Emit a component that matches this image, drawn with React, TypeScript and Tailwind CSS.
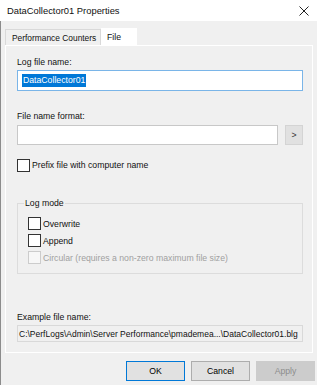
import React from "react";

function CheckBox({ disabled = false }: { disabled?: boolean }) {
  return (
    <span
      className={
        "inline-block w-[13px] h-[13px] border shrink-0 " +
        (disabled ? "border-[#cccccc] bg-[#f7f7f7]" : "border-[#333333] bg-white")
      }
    />
  );
}

function Button({
  label,
  primary = false,
  disabled = false,
}: {
  label: string;
  primary?: boolean;
  disabled?: boolean;
}) {
  return (
    <div
      className={
        "w-[59px] h-[20px] flex items-center justify-center border " +
        (primary
          ? "border-[#0078d7] bg-[#e1e1e1] text-black"
          : disabled
            ? "border-[#cccccc] bg-[#cccccc] text-[#8c8c8c]"
            : "border-[#adadad] bg-[#e1e1e1] text-black")
      }
    >
      {label}
    </div>
  );
}

export default function App() {
  return (
    <div
      className="w-[317px] h-[385px] bg-[#f0f0f0] flex flex-col text-[8.7px] text-[#111] leading-[14px] overflow-hidden"
      style={{ fontFamily: '"Liberation Sans", Arial, sans-serif' }}
    >
      {/* Title bar */}
      <div className="h-[21px] bg-white flex items-center justify-between pl-[7px] pr-[8px] shrink-0">
        <span className="text-[9.4px]">DataCollector01 Properties</span>
        <svg width="10" height="10" viewBox="0 0 10 10" className="text-[#222]">
          <path d="M0.5 0.5 L9.5 9.5 M9.5 0.5 L0.5 9.5" stroke="currentColor" strokeWidth="1" />
        </svg>
      </div>

      <div className="flex-1 border-l border-[#8c8c8c] pl-[4px] pt-[7px]">
        {/* Tabs */}
        <div className="flex items-end h-[17px]">
          <div className="h-[16px] w-[96px] pl-[6px] flex items-center border border-b-0 border-[#d9d9d9] bg-[#f0f0f0] text-[8.4px]">
            Performance Counters
          </div>
          <div className="h-[17px] w-[36px] pl-[6px] flex items-center bg-white">File</div>
        </div>

        {/* Tab page */}
        <div className="w-[308px] h-[308px] border border-white pl-[11px] pr-[8px] pt-[9px]">
          <div>Log file name:</div>
          <div className="mt-[1px] w-[286px] h-[21px] border border-[#7ab5e8] bg-white flex items-center pl-[4px]">
            <span className="bg-[#0078d7] text-white px-[1px] leading-[13px]">DataCollector01</span>
          </div>

          <div className="mt-[18px]">File name format:</div>
          <div className="mt-[2px] flex gap-[7px]">
            <div className="w-[261px] h-[20px] border border-[#c8c8c8] bg-white" />
            <div className="w-[18px] h-[20px] border border-[#d4d4d4] bg-[#e1e1e1] flex items-center justify-center text-[#333]">
              &gt;
            </div>
          </div>

          <label className="mt-[13px] flex items-center gap-[2px]">
            <CheckBox />
            <span>Prefix file with computer name</span>
          </label>

          {/* Log mode group */}
          <div className="relative mt-[31px] w-[286px] h-[71px] border border-[#dcdcdc] pl-[10px] pt-[13px]">
            <span className="absolute -top-[8px] left-[6px] px-[1px] bg-[#f0f0f0]">Log mode</span>
            <div className="flex flex-col gap-[4px]">
              <div className="h-[13px] flex items-center gap-[2px]">
                <CheckBox />
                <span>Overwrite</span>
              </div>
              <div className="h-[13px] flex items-center gap-[2px]">
                <CheckBox />
                <span>Append</span>
              </div>
              <div className="h-[13px] flex items-center gap-[2px] text-[#a0a0a0]">
                <CheckBox disabled />
                <span>Circular (requires a non-zero maximum file size)</span>
              </div>
            </div>
          </div>

          <div className="mt-[36px]">Example file name:</div>
          <div className="mt-[1px] w-[286px] h-[17px] border border-[#d9d9d9] bg-[#f0f0f0] flex items-center pl-[1px] whitespace-nowrap overflow-hidden text-[8.5px]">
            C:\PerfLogs\Admin\Server Performance\pmademea...\DataCollector01.blg
          </div>
        </div>

        {/* Buttons */}
        <div className="mt-[8px] flex justify-end gap-[6px] pr-[2px]">
          <Button label="OK" primary />
          <Button label="Cancel" />
          <Button label="Apply" disabled />
        </div>
      </div>
    </div>
  );
}
